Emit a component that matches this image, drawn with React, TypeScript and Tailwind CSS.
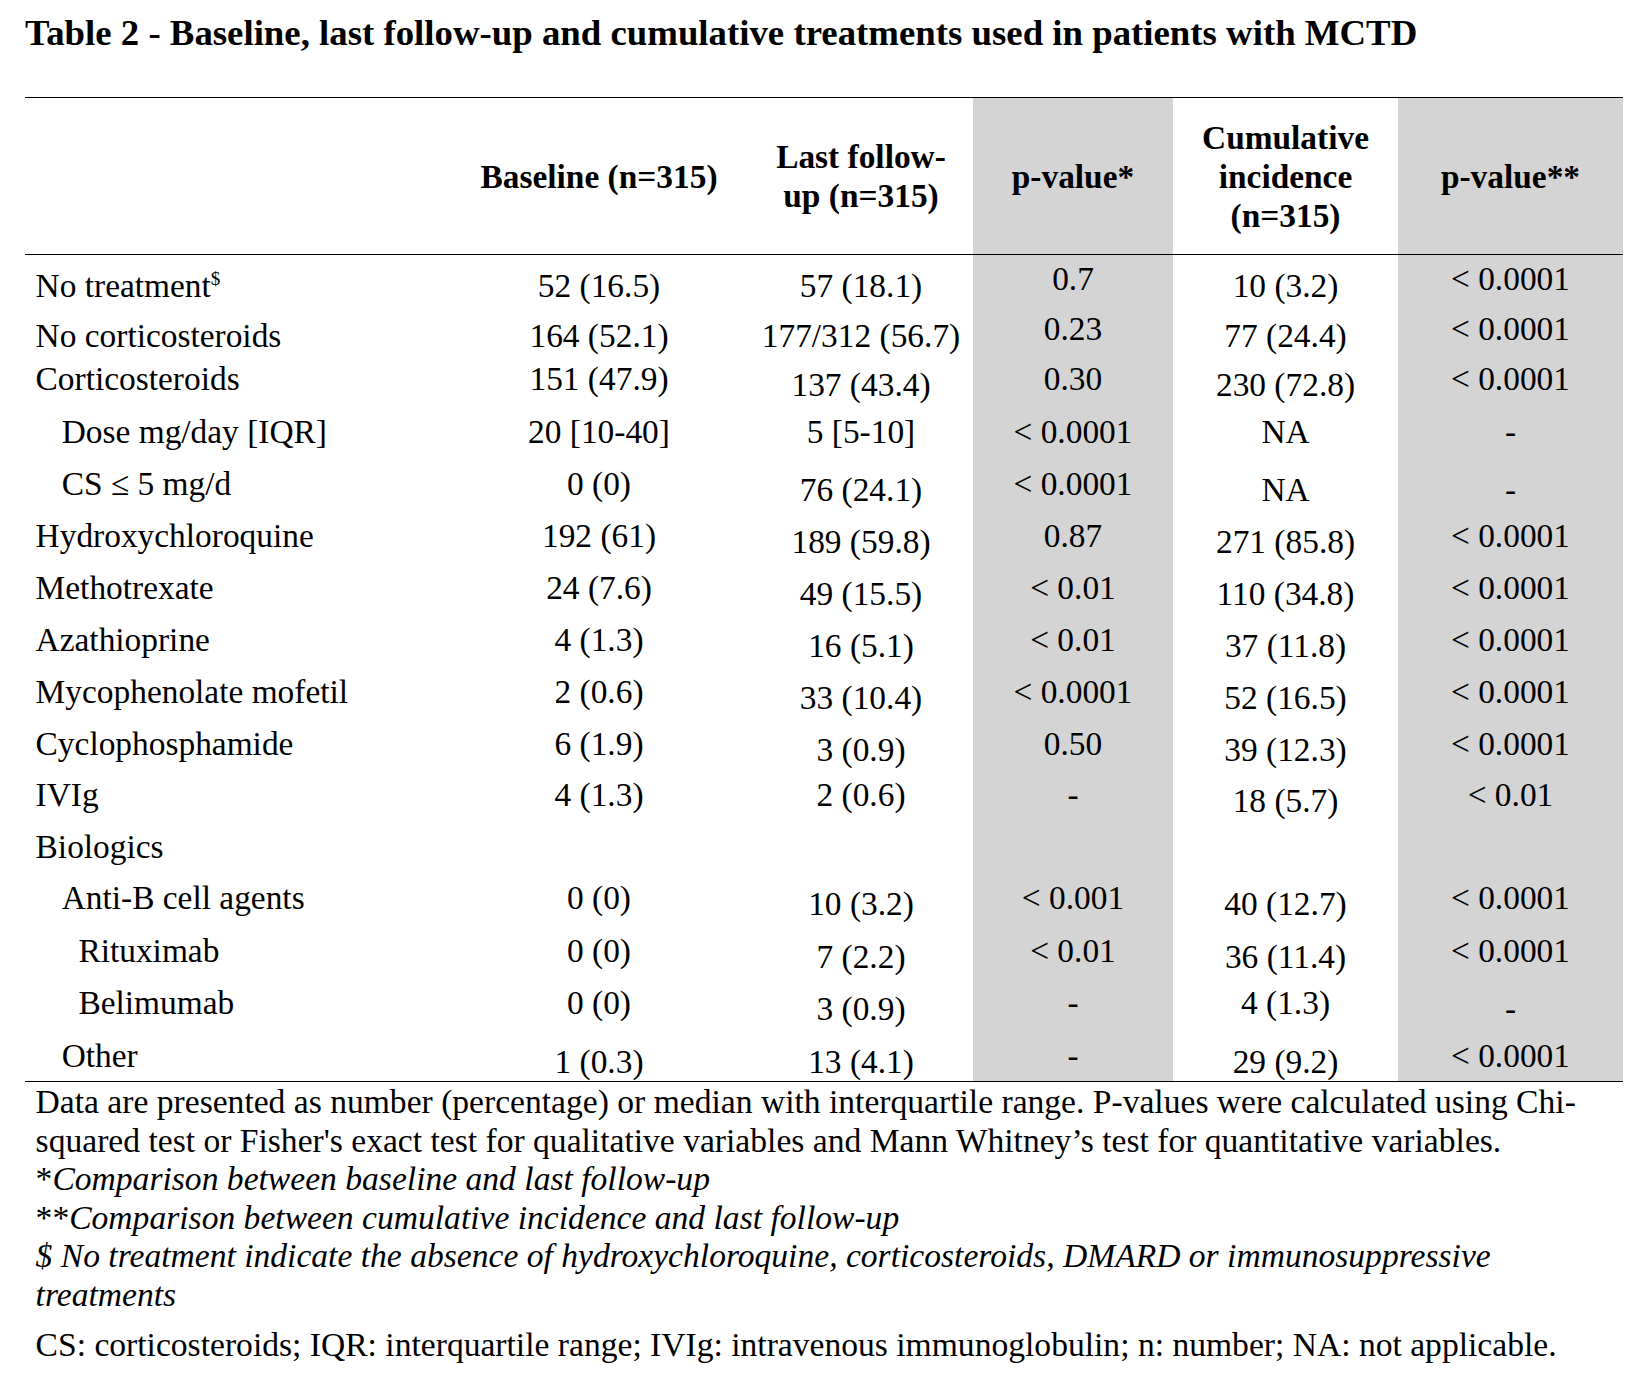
import React from "react";

type Off = "0" | "d" | "u";

const offClass: Record<Off, string> = {
  "0": "pt-[11.5px]",
  d: "pt-[18px]",
  u: "pt-[5px]",
};

const colW = ["w-[300px]", "w-[224px]", "w-[200px]", "w-[225px]", "w-[225px]"];
const colBg = ["", "", "bg-[#d4d4d4]", "", "bg-[#d4d4d4]"];

type Row = {
  label: React.ReactNode;
  indent: string;
  h: string;
  vals: string[];
  offs: Off[];
};

const rows: Row[] = [
  {
    label: (
      <>
        No treatment
        <span className="align-super text-[19px] leading-none">$</span>
      </>
    ),
    indent: "pl-[10.6px]",
    h: "h-[50px]",
    vals: ["52 (16.5)", "57 (18.1)", "0.7", "10 (3.2)", "< 0.0001"],
    offs: ["0", "0", "u", "0", "u"],
  },
  {
    label: "No corticosteroids",
    indent: "pl-[10.6px]",
    h: "h-[43px]",
    vals: ["164 (52.1)", "177/312 (56.7)", "0.23", "77 (24.4)", "< 0.0001"],
    offs: ["0", "0", "u", "0", "u"],
  },
  {
    label: "Corticosteroids",
    indent: "pl-[10.6px]",
    h: "h-[53px]",
    vals: ["151 (47.9)", "137 (43.4)", "0.30", "230 (72.8)", "< 0.0001"],
    offs: ["0", "d", "0", "d", "0"],
  },
  {
    label: "Dose mg/day [IQR]",
    indent: "pl-[36.7px]",
    h: "h-[52px]",
    vals: ["20 [10-40]", "5 [5-10]", "< 0.0001", "NA", "-"],
    offs: ["0", "0", "0", "0", "0"],
  },
  {
    label: "CS ≤ 5 mg/d",
    indent: "pl-[36.7px]",
    h: "h-[52px]",
    vals: ["0 (0)", "76 (24.1)", "< 0.0001", "NA", "-"],
    offs: ["0", "d", "0", "d", "d"],
  },
  {
    label: "Hydroxychloroquine",
    indent: "pl-[10.6px]",
    h: "h-[52px]",
    vals: ["192 (61)", "189 (59.8)", "0.87", "271 (85.8)", "< 0.0001"],
    offs: ["0", "d", "0", "d", "0"],
  },
  {
    label: "Methotrexate",
    indent: "pl-[10.6px]",
    h: "h-[52px]",
    vals: ["24 (7.6)", "49 (15.5)", "< 0.01", "110 (34.8)", "< 0.0001"],
    offs: ["0", "d", "0", "d", "0"],
  },
  {
    label: "Azathioprine",
    indent: "pl-[10.6px]",
    h: "h-[52px]",
    vals: ["4 (1.3)", "16 (5.1)", "< 0.01", "37 (11.8)", "< 0.0001"],
    offs: ["0", "d", "0", "d", "0"],
  },
  {
    label: "Mycophenolate mofetil",
    indent: "pl-[10.6px]",
    h: "h-[52px]",
    vals: ["2 (0.6)", "33 (10.4)", "< 0.0001", "52 (16.5)", "< 0.0001"],
    offs: ["0", "d", "0", "d", "0"],
  },
  {
    label: "Cyclophosphamide",
    indent: "pl-[10.6px]",
    h: "h-[51px]",
    vals: ["6 (1.9)", "3 (0.9)", "0.50", "39 (12.3)", "< 0.0001"],
    offs: ["0", "d", "0", "d", "0"],
  },
  {
    label: "IVIg",
    indent: "pl-[10.6px]",
    h: "h-[52px]",
    vals: ["4 (1.3)", "2 (0.6)", "-", "18 (5.7)", "< 0.01"],
    offs: ["0", "0", "0", "d", "0"],
  },
  {
    label: "Biologics",
    indent: "pl-[10.6px]",
    h: "h-[51px]",
    vals: ["", "", "", "", ""],
    offs: ["0", "0", "0", "0", "0"],
  },
  {
    label: "Anti-B cell agents",
    indent: "pl-[36.7px]",
    h: "h-[53px]",
    vals: ["0 (0)", "10 (3.2)", "< 0.001", "40 (12.7)", "< 0.0001"],
    offs: ["0", "d", "0", "d", "0"],
  },
  {
    label: "Rituximab",
    indent: "pl-[53.4px]",
    h: "h-[52px]",
    vals: ["0 (0)", "7 (2.2)", "< 0.01", "36 (11.4)", "< 0.0001"],
    offs: ["0", "d", "0", "d", "0"],
  },
  {
    label: "Belimumab",
    indent: "pl-[53.4px]",
    h: "h-[53px]",
    vals: ["0 (0)", "3 (0.9)", "-", "4 (1.3)", "-"],
    offs: ["0", "d", "0", "0", "d"],
  },
  {
    label: "Other",
    indent: "pl-[36.7px]",
    h: "h-[56px]",
    vals: ["1 (0.3)", "13 (4.1)", "-", "29 (9.2)", "< 0.0001"],
    offs: ["d", "d", "0", "d", "0"],
  },
];

export default function App() {
  return (
    <div className="w-[1640px] h-[1384px] bg-white text-black font-['Liberation_Serif','Times_New_Roman',serif] px-[25px]">
      <div className="pt-[12px] text-[36.8px] leading-[42px] font-bold whitespace-nowrap">
        Table 2 - Baseline, last follow-up and cumulative treatments used in patients with MCTD
      </div>

      <div className="mt-[43px] w-[1598px] border-t border-b border-black text-[33.4px] leading-[38px]">
        {/* header */}
        <div className="flex h-[157px] border-b border-black font-bold leading-[39px]">
          <div className="w-[424px]" />
          <div className="w-[300px] flex items-center justify-center text-center">
            Baseline (n=315)
          </div>
          <div className="w-[224px] flex items-center justify-center text-center">
            <span>
              Last follow-
              <br />
              up (n=315)
            </span>
          </div>
          <div className="w-[200px] flex items-center justify-center text-center bg-[#d4d4d4]">
            p-value*
          </div>
          <div className="w-[225px] flex items-center justify-center text-center">
            <span>
              Cumulative
              <br />
              incidence
              <br />
              (n=315)
            </span>
          </div>
          <div className="w-[225px] flex items-center justify-center text-center bg-[#d4d4d4]">
            p-value**
          </div>
        </div>

        {/* body */}
        {rows.map((r, i) => (
          <div key={i} className={`flex ${r.h}`}>
            <div className={`w-[424px] pt-[11.5px] whitespace-nowrap ${r.indent}`}>{r.label}</div>
            {r.vals.map((v, j) => (
              <div
                key={j}
                className={`${colW[j]} ${colBg[j]} ${offClass[r.offs[j]]} text-center whitespace-nowrap`}
              >
                {v}
              </div>
            ))}
          </div>
        ))}
      </div>

      <div className="pl-[10.6px] pt-[1px] text-[33.6px] leading-[38.6px] whitespace-nowrap">
        <div>
          Data are presented as number (percentage) or median with interquartile range. P-values were calculated using Chi-
        </div>
        <div>
          squared test or Fisher's exact test for qualitative variables and Mann Whitney’s test for quantitative variables.
        </div>
        <div>
          *<span className="italic">Comparison between baseline and last follow-up</span>
        </div>
        <div>
          **<span className="italic">Comparison between cumulative incidence and last follow-up</span>
        </div>
        <div className="italic">
          $ No treatment indicate the absence of hydroxychloroquine, corticosteroids, DMARD or immunosuppressive
        </div>
        <div className="italic">treatments</div>
        <div className="mt-[11px]">
          CS: corticosteroids; IQR: interquartile range; IVIg: intravenous immunoglobulin; n: number; NA: not applicable.
        </div>
      </div>
    </div>
  );
}
